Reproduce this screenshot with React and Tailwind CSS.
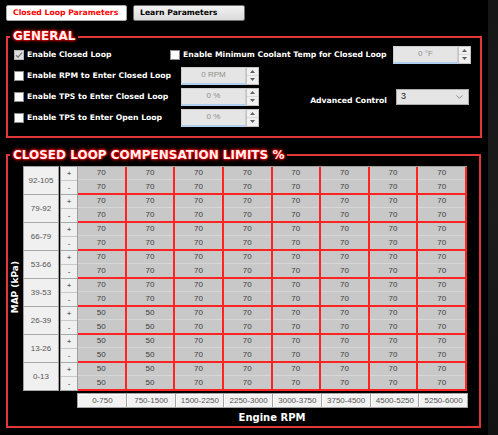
import React from 'react';

const RED = '#ff2424';

const mapRows = ['92-105', '79-92', '66-79', '53-66', '39-53', '26-39', '13-26', '0-13'];
const rpmCols = ['0-750', '750-1500', '1500-2250', '2250-3000', '3000-3750', '3750-4500', '4500-5250', '5250-6000'];

const cellValue = (r, c) => (r >= 5 && c < 2 ? 50 : 70);

const Check = ({ checked }) => (
  checked ? (
    <span className="w-[10px] h-[10px] shrink-0 flex items-center justify-center bg-[#dedede] border border-[#b4b4b4]">
      <svg width="8" height="8" viewBox="0 0 8 8">
        <path d="M1 4.2 L3 6.2 L7 1.6" fill="none" stroke="#7c7c7c" strokeWidth="1.3" />
      </svg>
    </span>
  ) : (
    <span className="w-[10px] h-[10px] shrink-0 bg-white border border-[#8c8c8c]" />
  )
);

const Label = ({ children }) => (
  <span className="text-white font-bold text-[7.7px] leading-[10px] font-['DejaVu_Sans',sans-serif] whitespace-nowrap">
    {children}
  </span>
);

const CheckRow = ({ checked, children, className }) => (
  <div className={`flex items-center gap-[3px] ${className}`}>
    <Check checked={checked} />
    <Label>{children}</Label>
  </div>
);

const SpinBox = ({ value }) => (
  <div className="flex w-[78px] h-[18px]">
    <div className="flex-1 flex items-center justify-center bg-[#e5e5e5] border border-[#cdcdcd] border-b-2 border-b-[#b0cfee] text-[8px] text-[#8e8e8e] font-['Liberation_Sans',sans-serif]">
      {value}
    </div>
    <div className="w-[13px] flex flex-col bg-[#f0f0f0] border border-[#c4c4c4]">
      <div className="flex-1 flex items-center justify-center border-b border-[#dadada]">
        <svg width="5" height="3" viewBox="0 0 5 3"><path d="M0 3 L2.5 0 L5 3Z" fill="#606060" /></svg>
      </div>
      <div className="flex-1 flex items-center justify-center">
        <svg width="5" height="3" viewBox="0 0 5 3"><path d="M0 0 L2.5 3 L5 0Z" fill="#606060" /></svg>
      </div>
    </div>
  </div>
);

const Select = ({ value }) => (
  <div className="w-[73px] h-[16px] flex items-center justify-between pl-[4px] pr-[5px] bg-[#e5e5e5] border border-[#acacac] text-[9px] text-[#222] font-['Liberation_Sans',sans-serif]">
    <span>{value}</span>
    <svg width="7" height="4" viewBox="0 0 7 4"><path d="M0.5 0.5 L3.5 3.3 L6.5 0.5" fill="none" stroke="#8a8a8a" strokeWidth="1" /></svg>
  </div>
);

const glow = "text-[#fff2f2] font-bold font-['DejaVu_Sans',sans-serif] [text-shadow:0_0_1px_#ff0000,0_0_2px_#ff0000,0_0_3px_#ff0000,0_0_4px_#ff1010]";

const General = () => (
  <fieldset className="ml-[6px] mt-[8px] w-[476px] border-2 border-[#e2363b] pb-[8px]">
    <legend className={`ml-[2px] px-[3px] text-[12px] leading-[15px] ${glow}`}>GENERAL</legend>
    <div className="pl-[6px] flex flex-col">
      <div className="flex items-center h-[21px]">
        <CheckRow checked className="w-[156px]">Enable Closed Loop</CheckRow>
        <CheckRow className="w-[223px]">Enable Minimum Coolant Temp for Closed Loop</CheckRow>
        <SpinBox value="0 °F" />
      </div>
      <div className="flex items-center h-[21px]">
        <CheckRow className="w-[167px]">Enable RPM to Enter Closed Loop</CheckRow>
        <SpinBox value="0 RPM" />
      </div>
      <div className="flex items-center h-[21px]">
        <CheckRow className="w-[167px]">Enable TPS to Enter Closed Loop</CheckRow>
        <SpinBox value="0 %" />
        <div className="w-[128px] text-right"><Label>Advanced Control</Label></div>
        <div className="ml-[9px]"><Select value="3" /></div>
      </div>
      <div className="flex items-center h-[21px]">
        <CheckRow className="w-[167px]">Enable TPS to Enter Open Loop</CheckRow>
        <SpinBox value="0 %" />
      </div>
    </div>
  </fieldset>
);

const num = "font-['Liberation_Sans',sans-serif] text-[8px]";

const CompTable = () => (
  <div className="flex mt-[3px]">
    <div className="w-[15px] flex items-center justify-center">
      <span className="[writing-mode:vertical-rl] rotate-180 text-white font-bold text-[9px] font-['DejaVu_Sans',sans-serif] whitespace-nowrap">
        MAP (kPa)
      </span>
    </div>
    <div className="flex flex-col">
      <div className="flex">
        <div className="w-[36px] flex flex-col border-x border-t border-[#a0a0a0] bg-[#f0f0f0]">
          {mapRows.map(r => (
            <div key={r} className={`h-[28px] flex items-center justify-center border-b border-[#a8a8a8] text-[#555] ${num}`}>
              {r}
            </div>
          ))}
        </div>
        <div className="w-[17px] ml-[1px] flex flex-col border-l border-t border-[#a0a0a0] bg-[#f0f0f0]">
          {mapRows.map(r => (
            <React.Fragment key={r}>
              <div className={`h-[14px] flex items-center justify-center border-b border-[#c8c8c8] text-[#333] ${num}`}>+</div>
              <div className={`h-[14px] flex items-center justify-center border-b border-[#a8a8a8] text-[#333] ${num}`}>-</div>
            </React.Fragment>
          ))}
        </div>
        <div className="w-[390px] grid grid-cols-8 border-l border-t border-[#a0a0a0]">
          {mapRows.map((r, ri) => rpmCols.map((c, ci) => (
            <div key={r + c} className="h-[28px] flex flex-col bg-[#c8c8c8] border-r-2 border-b-2 border-[#ff2424]">
              <div className={`h-[13px] flex items-center justify-center border-b border-[#d6d6d6] text-[#3c3c3c] ${num}`}>{cellValue(ri, ci)}</div>
              <div className={`flex-1 flex items-center justify-center text-[#3c3c3c] ${num}`}>{cellValue(ri, ci)}</div>
            </div>
          )))}
        </div>
      </div>
      <div className="flex mt-[2px]">
        <div className="w-[54px]" />
        <div className="w-[391px] h-[15px] flex gap-px bg-[#a4a4a4] border border-[#a4a4a4]">
          {rpmCols.map(c => (
            <div key={c} className={`flex-1 flex items-center justify-center bg-[#f2f2f2] border-t border-l border-white text-[#555] ${num}`}>
              {c}
            </div>
          ))}
        </div>
      </div>
    </div>
  </div>
);

const Compensation = () => (
  <fieldset className="ml-[6px] mt-[9px] w-[475px] border-2 border-[#e2363b] pb-[2px]">
    <legend className={`ml-[2px] px-[3px] text-[12px] leading-[16px] ${glow}`}>CLOSED LOOP COMPENSATION LIMITS %</legend>
    <CompTable />
    <div className="flex mt-[4px]">
      <div className="w-[69px]" />
      <div className="w-[390px] text-center text-white font-bold text-[10px] leading-[12px] font-['DejaVu_Sans',sans-serif]">
        Engine RPM
      </div>
    </div>
  </fieldset>
);

export default function App() {
  return (
    <div className="w-[498px] h-[435px] flex bg-black overflow-hidden">
      <div className="w-[488px] pt-[5px]">
        <div className="flex ml-[6px] gap-[6px]">
          <div className="w-[121px] h-[16px] flex items-center pl-[6px] bg-white border border-[#a8a8a8] rounded-[2px] text-[#ff0000] font-bold text-[7.7px] font-['DejaVu_Sans',sans-serif]">
            Closed Loop Parameters
          </div>
          <div className="w-[112px] h-[16px] flex items-center pl-[6px] bg-gradient-to-b from-[#f2f2f2] to-[#dadada] border border-[#707070] rounded-[2px] text-black font-bold text-[7.7px] font-['DejaVu_Sans',sans-serif]">
            Learn Parameters
          </div>
        </div>
        <General />
        <Compensation />
      </div>
      <div className="w-[10px] bg-gradient-to-b from-[#161616] via-[#1c1c1c] to-[#121212]" />
    </div>
  );
}
